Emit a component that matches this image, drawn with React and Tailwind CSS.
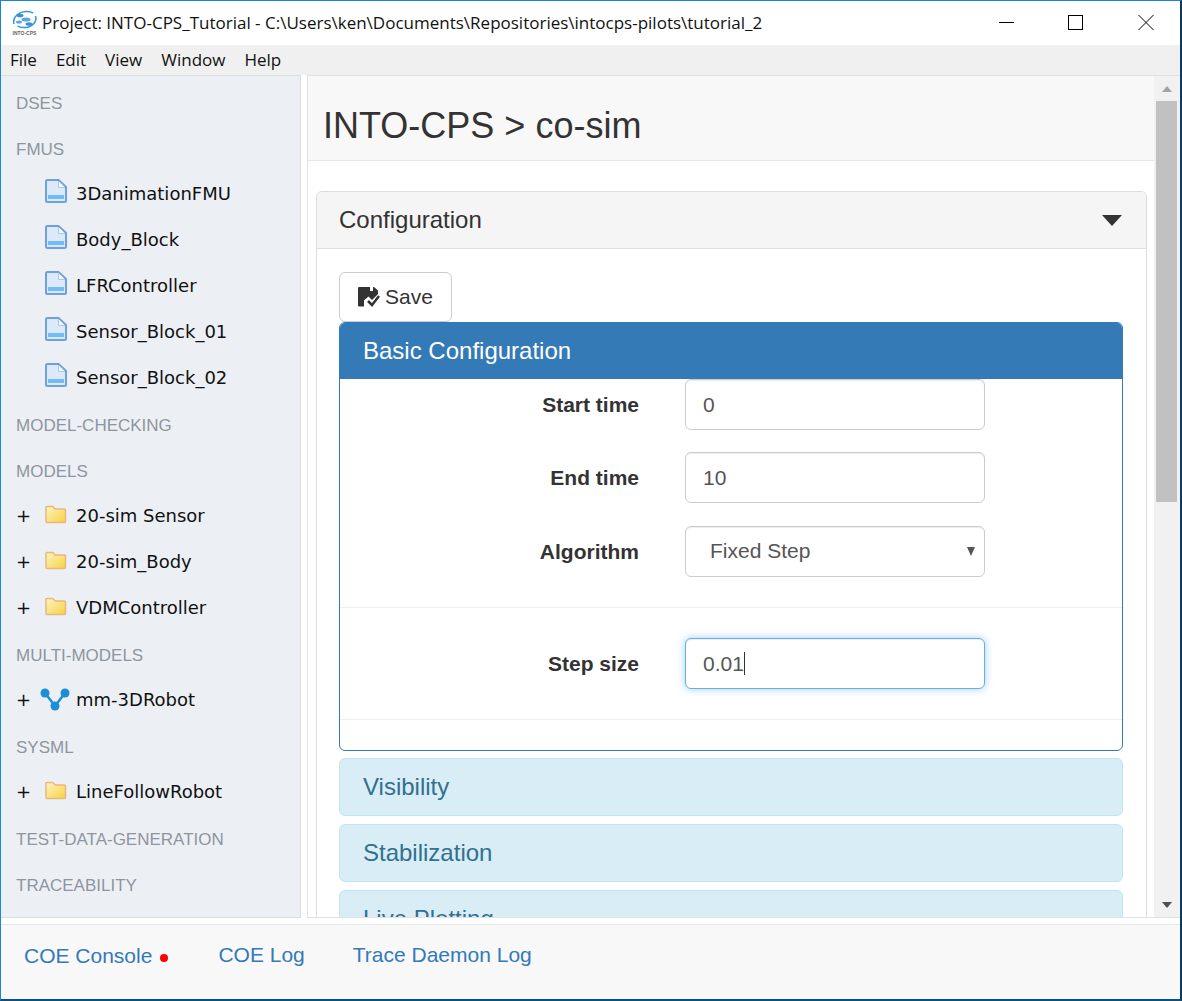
import React from 'react';

const fmus = ['3DanimationFMU', 'Body_Block', 'LFRController', 'Sensor_Block_01', 'Sensor_Block_02'];
const models = ['20-sim Sensor', '20-sim_Body', 'VDMController'];

const FileIcon = () => (
  <svg width="22" height="24" viewBox="0 0 22 24" className="-mt-[4px]">
    <path d="M1 2.500a1.500 1.500 0 0 1 1.500-1.500h11l7.500 7v13.500a1.500 1.500 0 0 1-1.500 1.500h-17a1.500 1.500 0 0 1-1.500-1.500z" fill="#dbe9fb" stroke="#6f9fdc" strokeWidth="2" />
    <path d="M13.500 2v6.500h6.500" fill="#f4f9ff" stroke="#a9c8ec" />
    <rect x="3" y="16" width="16" height="4" fill="#72bcf5" />
  </svg>
);

const FolderIcon = () => (
  <svg width="22" height="19" viewBox="0 0 22 19" className="-mt-[2px]">
    <defs>
      <linearGradient id="folderFill" x1="0" y1="0" x2="1" y2="1">
        <stop offset="0" stopColor="#fdf3c4" />
        <stop offset="1" stopColor="#f6d23f" />
      </linearGradient>
    </defs>
    <path d="M1 2.500a1 1 0 0 1 1-1h6l2 2.500h9.500a1 1 0 0 1 1 1v11.500a1 1 0 0 1-1 1h-17.500a1 1 0 0 1-1-1z" fill="url(#folderFill)" stroke="#e8b87c" strokeWidth="1.500" />
  </svg>
);

const GraphIcon = () => (
  <svg width="32" height="24" viewBox="0 0 32 24" className="-ml-[6px]">
    <path d="M6 6l10 13L26 6" fill="none" stroke="#1b8fd6" strokeWidth="2.500" />
    <circle cx="6" cy="6" r="4.500" fill="#1b8fd6" />
    <circle cx="26" cy="6" r="4.500" fill="#1b8fd6" />
    <circle cx="16" cy="19" r="4.500" fill="#1b8fd6" />
  </svg>
);

const Heading = ({ children }) => (
  <div className="h-[46px] flex items-center pl-[15px] text-[17px] text-[#8f959f]">{children}</div>
);

const TreeRow = ({ icon, label, expandable }) => (
  <div className="h-[46px] flex items-center pl-[15px] font-['DejaVu_Sans',sans-serif] text-[18px] text-[#111]">
    <span className="w-[29px] text-[18px]">{expandable ? '+' : ''}</span>
    <span className="w-[31px] flex items-center">{icon}</span>
    <span>{label}</span>
  </div>
);

const Group = ({ children }) => <div className="-mt-[3px] mb-[3px]">{children}</div>;

const Sidebar = () => (
  <aside className="w-[300px] shrink-0 bg-[#ecf0f5] border-r border-t border-b border-[#dedede] pt-[5px] overflow-hidden">
    <Heading>DSES</Heading>
    <Heading>FMUS</Heading>
    <Group>
      {fmus.map((name) => <TreeRow key={name} icon={<FileIcon />} label={name} />)}
    </Group>
    <Heading>MODEL-CHECKING</Heading>
    <Heading>MODELS</Heading>
    <Group>
      {models.map((name) => <TreeRow key={name} expandable icon={<FolderIcon />} label={name} />)}
    </Group>
    <Heading>MULTI-MODELS</Heading>
    <Group>
      <TreeRow expandable icon={<GraphIcon />} label="mm-3DRobot" />
    </Group>
    <Heading>SYSML</Heading>
    <Group>
      <TreeRow expandable icon={<FolderIcon />} label="LineFollowRobot" />
    </Group>
    <Heading>TEST-DATA-GENERATION</Heading>
    <Heading>TRACEABILITY</Heading>
  </aside>
);

const FormRow = ({ label, className, children }) => (
  <div className={`flex items-center ${className}`}>
    <label className="w-[299px] text-right font-bold text-[21px] text-[#333]">{label}</label>
    <div className="ml-[46px] w-[300px]">{children}</div>
  </div>
);

const inputClass = 'block w-full h-[51px] px-[17px] bg-white border rounded-[6px] text-[21px] text-[#555]';
const idleClass = 'border-[#ccc] shadow-[inset_0_1px_1px_rgba(0,0,0,0.075)]';
const focusClass = 'border-[#66afe9] shadow-[inset_0_1px_1px_rgba(0,0,0,0.075),0_0_8px_rgba(102,175,233,0.6)]';

const CollapsedPanel = ({ title }) => (
  <div className="shrink-0 h-[58px] mt-[8px] flex items-center px-[23px] bg-[#d9edf7] border border-[#bce8f1] rounded-[6px] text-[24px] text-[#31708f]">
    {title}
  </div>
);

const BasicConfiguration = () => (
  <div className="border border-[#337ab7] rounded-[6px] h-[429px] overflow-hidden">
    <div className="h-[56px] flex items-center px-[23px] bg-[#337ab7] text-white text-[24px]">Basic Configuration</div>
    <FormRow label="Start time">
      <input readOnly value="0" className={`${inputClass} ${idleClass}`} />
    </FormRow>
    <FormRow label="End time" className="mt-[22px]">
      <input readOnly value="10" className={`${inputClass} ${idleClass}`} />
    </FormRow>
    <FormRow label="Algorithm" className="mt-[23px]">
      <div className={`${inputClass} ${idleClass} flex items-center justify-between !pr-[9px] !pl-[24px] pb-[1px]`}>
        <span>Fixed Step</span>
        <span className="w-0 h-0 border-x-[4.500px] border-x-transparent border-t-[9px] border-t-[#555]" />
      </div>
    </FormRow>
    <div className="mt-[30px] border-t border-[#eee]" />
    <FormRow label="Step size" className="mt-[30px]">
      <div className={`${inputClass} ${focusClass} flex items-center`}>
        <span>0.01</span>
        <span className="w-px h-[23px] bg-[#333]" />
      </div>
    </FormRow>
    <div className="mt-[30px] border-t border-[#eee]" />
  </div>
);

const Configuration = () => (
  <div className="mx-[8px] mt-[30px] border border-[#ddd] rounded-[6px] w-[831px]">
    <div className="h-[57px] flex items-center justify-between pl-[22px] pr-[24px] bg-[#f5f5f5] border-b border-[#ddd] rounded-t-[6px]">
      <span className="text-[24px] text-[#333]">Configuration</span>
      <span className="w-0 h-0 border-x-[10px] border-x-transparent border-t-[11px] border-t-[#333]" />
    </div>
    <div className="pl-[22px] pr-[23px] pt-[23px]">
      <button className="w-[113px] h-[50px] flex items-center justify-center gap-[5px] border border-[#ccc] rounded-[6px] bg-white text-[21px] text-[#333]">
        <svg width="22" height="20" viewBox="0 0 22 20">
          <path fill="#333" fillRule="evenodd" d="M1 0h15l4 3.500v3.500l-6 6-3.500-3.500-4 3.500H6v6.500H1a1 1 0 0 1-1-1V1a1 1 0 0 1 1-1zM12 0v4h3V0z" />
          <path fill="none" stroke="#333" strokeWidth="2.500" d="M10 14l4 4 7-9" />
        </svg>
        Save
      </button>
      <BasicConfiguration />
      <div className="flex flex-col -mt-[1px]">
        <CollapsedPanel title="Visibility" />
        <CollapsedPanel title="Stabilization" />
        <CollapsedPanel title="Live Plotting" />
      </div>
    </div>
  </div>
);

const Scrollbar = () => (
  <div className="w-[26px] shrink-0 flex flex-col items-center bg-[#f1f1f1]">
    <div className="h-[25px] flex items-center justify-center">
      <span className="w-0 h-0 border-x-[5.500px] border-x-transparent border-b-[6px] border-b-[#a3a3a3]" />
    </div>
    <div className="w-[21px] h-[401px] -ml-[1px] bg-[#c1c1c1]" />
    <div className="flex-1 flex items-end justify-center pb-[9px]">
      <span className="w-0 h-0 border-x-[5.500px] border-x-transparent border-t-[6px] border-t-[#505050]" />
    </div>
  </div>
);

const TitleBar = () => (
  <div className="h-[44px] shrink-0 flex items-center bg-white">
    <svg width="26" height="28" viewBox="0 0 26 28" className="ml-[11px] mr-[4px]">
      <path d="M2 15C0 8 7 3 14 2.500c3-.2 5 .3 7 1.500" fill="none" stroke="#2b9ad6" strokeWidth="1.500" />
      <path d="M23.500 7c2 5-3 11-10 11.500-3 .2-6 0-8-1.500" fill="none" stroke="#2b9ad6" strokeWidth="1.500" />
      <ellipse cx="8" cy="6.500" rx="3.500" ry="1.800" fill="#3d8fd1" />
      <ellipse cx="14" cy="10.500" rx="4.500" ry="2" fill="#5aa6dd" />
      <ellipse cx="17" cy="15" rx="3.500" ry="1.800" fill="#3d8fd1" />
      <ellipse cx="7" cy="13" rx="3" ry="1.600" fill="#5aa6dd" />
      <text x="12.500" y="25.500" textAnchor="middle" fontSize="5" fontWeight="bold" fill="#666" fontFamily="Liberation Sans">INTO-CPS</text>
    </svg>
    <span className="font-['Open_Sans',sans-serif] text-[17px] text-[#111]">Project: INTO-CPS_Tutorial - C:\Users\ken\Documents\Repositories\intocps-pilots\tutorial_2</span>
    <svg width="160" height="20" viewBox="0 0 160 20" className="ml-auto mr-[22px]">
      <path d="M1 9.500h15" stroke="#000" />
      <rect x="70.500" y="2.500" width="14" height="14" fill="none" stroke="#000" />
      <path d="M140.500 2l15 15M155.500 2l-15 15" stroke="#000" />
    </svg>
  </div>
);

const MenuBar = () => (
  <div className="h-[30px] shrink-0 flex items-center gap-[19px] pl-[9px] bg-[#f0f0f0] font-['Open_Sans',sans-serif] text-[17px] text-[#111]">
    {['File', 'Edit', 'View', 'Window', 'Help'].map((item) => <span key={item}>{item}</span>)}
  </div>
);

const Footer = () => (
  <div className="h-[75px] shrink-0 flex items-start pt-[15px] pl-[23px] bg-[#f8f8f8] border-t border-[#e7e7e7] text-[21px] text-[#337ab7]">
    <span>COE Console</span>
    <span className="ml-[8px] mt-[14px] w-[8px] h-[8px] rounded-full bg-[#f00]" />
    <span className="ml-[50px] -mt-[1px]">COE Log</span>
    <span className="ml-[48px] -mt-[1px]">Trace Daemon Log</span>
  </div>
);

export default function App() {
  return (
    <div className="w-[1182px] h-[1001px] flex flex-col overflow-hidden bg-white border-l border-t border-[#1a86d8] border-r-2 border-r-[#0b3a60] border-b-2 border-b-[#0c4f86] font-['Liberation_Sans',sans-serif]">
      <TitleBar />
      <MenuBar />
      <div className="h-[843px] shrink-0 flex gap-[6px]">
        <Sidebar />
        <main className="flex-1 min-w-0 flex border-l border-t border-b border-[#e2e2e2]">
          <div className="flex-1 min-w-0 overflow-hidden">
            <div className="h-[85px] flex items-end pb-[14px] pl-[15px] bg-[#f8f8f8] border-b border-[#e7e7e7] text-[36px] leading-[40px] text-[#333]">
              INTO-CPS &gt; co-sim
            </div>
            <Configuration />
          </div>
          <Scrollbar />
        </main>
      </div>
      <div className="h-[6px] shrink-0" />
      <Footer />
    </div>
  );
}
